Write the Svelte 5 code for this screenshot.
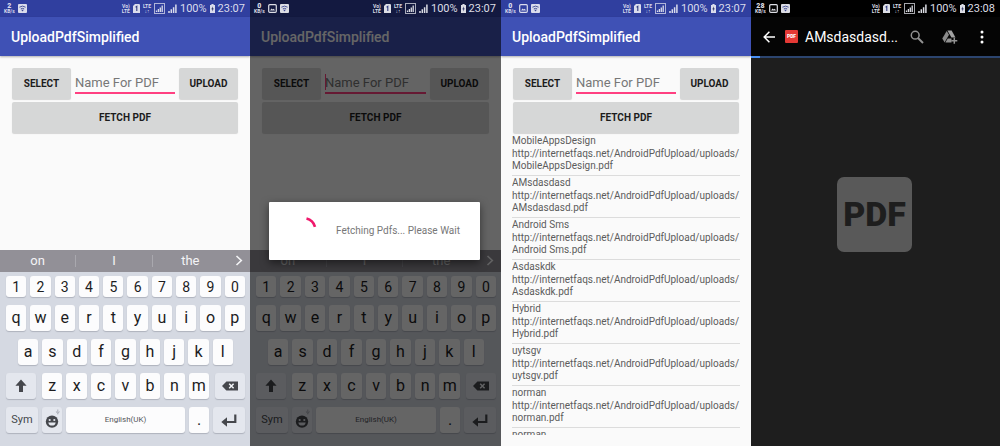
<script lang="ts">
  type Status = { speed: string; time: string; image: boolean };

  const numbers = '1234567890'.split('');
  const rowOne = 'qwertyuiop'.split('');
  const rowTwo = 'asdfghjkl'.split('');
  const rowThree = 'zxcvbnm'.split('');

  const baseUrl = 'http://internetfaqs.net/AndroidPdfUpload/uploads/';
  const pdfs = ['MobileAppsDesign', 'AMsdasdasd', 'Android Sms', 'Asdaskdk', 'Hybrid', 'uytsgv', 'norman', 'norman'];
</script>

{#snippet statusBar({ speed, time, image }: Status)}
  <div class="status">
    <span class="speed"><b>{speed}</b><span>KB/s</span></span>
    {#if image}
      <svg width="9" height="9" viewBox="0 0 9 9">
        <rect x="0.7" y="0.7" width="7.6" height="7.6" rx="1" fill="none" stroke="currentColor" stroke-width="1.2" />
        <path d="M2 6.6 3.6 4.4 4.7 5.6 5.8 4.8 7 6.6z" fill="currentColor" />
      </svg>
    {/if}
    <svg width="9" height="9" viewBox="0 0 9 9">
      <rect width="9" height="9" rx="1" fill="currentColor" />
      <path d="M1.4 3.2Q4.5 1 7.6 3.2M2.8 4.9Q4.5 3.8 6.2 4.9" fill="none" stroke="#3a4690" stroke-width="0.9" />
      <path d="M3.2 5.8h2.6L4.5 7.4z" fill="#3a4690" />
    </svg>
    <span class="spacer"></span>
    <span class="tiny"><span>Vo)</span><span>LTE</span></span>
    <svg width="7" height="9" viewBox="0 0 7 9">
      <path d="M2 0h4.2L7 .8V9H0V2z" fill="currentColor" />
      <path d="M2.6 3.2 3.8 2.4V7" fill="none" stroke="#303a80" stroke-width="1.1" />
    </svg>
    <span class="tiny"><span>LTE</span><span>↓↑</span></span>
    <svg width="11" height="11" viewBox="0 0 11 11">
      <rect x="0.5" y="0.5" width="10" height="10" fill="none" stroke="currentColor" opacity="0.75" />
      <path d="M2.5 9V7.4M4.4 9V6M6.3 9V4.4M8.2 9V2.6" stroke="currentColor" stroke-width="1.3" />
    </svg>
    <svg width="9" height="9" viewBox="0 0 9 9">
      <path d="M1 9V7M3.3 9V5.2M5.6 9V3.2M7.9 9V.6" stroke="currentColor" stroke-width="1.5" />
    </svg>
    <span>100%</span>
    <svg width="5" height="9" viewBox="0 0 5 9">
      <path d="M1.4 0h2.2v1H5v8H0V1h1.4z" fill="currentColor" />
      <path d="M3 2.2 1.3 5.2H2.4L2 7.6 3.8 4.4H2.7z" fill="#20275c" />
    </svg>
    <span class="time">{time}</span>
  </div>
{/snippet}

{#snippet form(id: string, focused: boolean)}
  <form class="form" onsubmit={(e) => e.preventDefault()}>
    <div class="fields">
      <button type="button" class="btn select">SELECT</button>
      <div class="field">
        {#if focused}<span class="caret"></span>{/if}
        <input {id} type="text" placeholder="Name For PDF" aria-label="Name For PDF" />
      </div>
      <button type="button" class="btn upload">UPLOAD</button>
    </div>
    <button type="submit" class="btn">FETCH PDF</button>
  </form>
{/snippet}

{#snippet keys(list: string[])}
  {#each list as key}
    <button type="button" class="key">{key}</button>
  {/each}
{/snippet}

{#snippet keyboard()}
  <div class="keyboard">
    <div class="suggestions">
      <button type="button">on</button>
      <button type="button">I</button>
      <button type="button">the</button>
      <button type="button" class="more" aria-label="More suggestions">
        <svg width="8" height="11" viewBox="0 0 8 11">
          <path d="M1.5 1 6.3 5.5 1.5 10" fill="none" stroke="currentColor" stroke-width="1.6" />
        </svg>
      </button>
    </div>
    <div class="rows">
      <div class="row short">{@render keys(numbers)}</div>
      <div class="row">{@render keys(rowOne)}</div>
      <div class="row inset">{@render keys(rowTwo)}</div>
      <div class="row">
        <button type="button" class="key fn shift" aria-label="Shift">
          <svg width="12" height="14" viewBox="0 0 12 14"><path d="M6 .5 11.6 6.8H8V13H4V6.8H.4z" fill="currentColor" /></svg>
        </button>
        {@render keys(rowThree)}
        <button type="button" class="key fn back" aria-label="Backspace">
          <svg width="16" height="10" viewBox="0 0 16 10">
            <path d="M4.4.5H16v9H4.4L0 5z" fill="currentColor" />
            <path d="M7.2 2.8l4.4 4.4M11.6 2.8 7.2 7.2" stroke="#f2f4f8" stroke-width="1.5" />
          </svg>
        </button>
      </div>
      <div class="row">
        <button type="button" class="key fn sym">Sym</button>
        <button type="button" class="key fn emoji" aria-label="Emoji">
          <svg width="18" height="24" viewBox="0 0 18 24">
            <circle cx="9" cy="13.6" r="6.2" fill="currentColor" />
            <circle cx="6.7" cy="12" r="1.1" fill="#e4e7ee" />
            <circle cx="11.3" cy="12" r="1.1" fill="#e4e7ee" />
            <path d="M5.3 14.4h7.4q-.7 3.2-3.7 3.2t-3.7-3.2z" fill="#e4e7ee" />
            <path d="M14.8 1.5v2.6M13.3 3.4q0 1.5 1.5 1.5t1.5-1.5M14.8 5v1.4" fill="none" stroke="#9a9ea8" stroke-width="0.8" />
          </svg>
        </button>
        <button type="button" class="key space">English(UK)</button>
        <button type="button" class="key dot">.</button>
        <button type="button" class="key fn enter" aria-label="Enter">
          <svg width="16" height="13" viewBox="0 0 16 13">
            <path d="M14.3.5V8H4" fill="none" stroke="currentColor" stroke-width="2.2" />
            <path d="M6 3.2V12.8L.3 8z" fill="currentColor" />
          </svg>
        </button>
      </div>
    </div>
  </div>
{/snippet}

<main class="screens">
  <section class="phone">
    {@render statusBar({ speed: '2', time: '23:07', image: false })}
    <header class="appbar"><h1>UploadPdfSimplified</h1></header>
    {@render form('name-start', false)}
    {@render keyboard()}
  </section>

  <section class="phone loading">
    {@render statusBar({ speed: '0', time: '23:07', image: true })}
    <header class="appbar"><h1>UploadPdfSimplified</h1></header>
    {@render form('name-loading', true)}
    {@render keyboard()}
    <div class="scrim">
      <div class="dialog" role="dialog" aria-label="Progress">
        <svg width="28" height="28" viewBox="0 0 28 28">
          <path d="M16.5 1.6A12 12 0 0 1 25 9.8" fill="none" stroke="#f0186c" stroke-width="2.6" />
        </svg>
        <p>Fetching Pdfs... Please Wait</p>
      </div>
    </div>
  </section>

  <section class="phone listing">
    {@render statusBar({ speed: '0', time: '23:07', image: true })}
    <header class="appbar"><h1>UploadPdfSimplified</h1></header>
    {@render form('name-list', false)}
    <ul class="list">
      {#each pdfs as name}
        <li>
          <span class="name">{name}</span>
          <span>{baseUrl}<wbr />{name}.pdf</span>
        </li>
      {/each}
    </ul>
  </section>

  <section class="phone viewer">
    {@render statusBar({ speed: '28', time: '23:08', image: true })}
    <header class="toolbar">
      <button type="button" aria-label="Back">
        <svg width="12" height="12" viewBox="0 0 12 12">
          <path d="M12 6H1.4M6.4.8 1.2 6l5.2 5.2" fill="none" stroke="#fff" stroke-width="1.5" />
        </svg>
      </button>
      <span class="badge">PDF</span>
      <h1>AMsdasdasd...</h1>
      <button type="button" class="search" aria-label="Search">
        <svg width="14" height="14" viewBox="0 0 14 14">
          <circle cx="5.2" cy="5.2" r="3.9" fill="none" stroke="#929292" stroke-width="1.5" />
          <path d="M8 8l5 5" stroke="#929292" stroke-width="1.9" />
        </svg>
      </button>
      <button type="button" class="drive" aria-label="Add to Drive">
        <svg width="16" height="14" viewBox="0 0 16 14">
          <path d="M4.7 1 7 4.8 2.6 12.4.3 8.6z" fill="#8a8a8a" />
          <path d="M5.4.6H9.6L13.5 7.5H9.4z" fill="#a2a2a2" />
          <path d="M5.7 8.4h3.8v4H3.4z" fill="#929292" />
          <path d="M12.3 7.8v6M9.3 10.8h6" stroke="#929292" stroke-width="1.5" />
        </svg>
      </button>
      <button type="button" aria-label="More options">
        <svg width="4" height="14" viewBox="0 0 4 14" fill="#fff">
          <circle cx="2" cy="2" r="1.5" /><circle cx="2" cy="7" r="1.5" /><circle cx="2" cy="12" r="1.5" />
        </svg>
      </button>
    </header>
    <div class="progress"><span></span></div>
    <div class="preview"><div class="placeholder">PDF</div></div>
  </section>
</main>

<style>
  :global(body) {
    margin: 0;
    background: #fafafa;
  }

  .screens {
    display: grid;
    grid-template-columns: 250fr 251fr 250fr 249fr;
    height: 100vh;
    font-family: Roboto, 'Liberation Sans', sans-serif;
  }

  .phone {
    position: relative;
    display: flex;
    flex-direction: column;
    min-width: 0;
    min-height: 0;
    overflow: hidden;
    background: #fafafa;
  }

  button {
    border: none;
    margin: 0;
    padding: 0;
    background: none;
    font-family: inherit;
    cursor: pointer;
  }

  svg {
    display: block;
    flex: none;
  }

  h1 {
    margin: 0;
  }

  .status {
    display: flex;
    align-items: center;
    gap: 3px;
    height: 17px;
    flex: none;
    padding: 0 5px 0 4px;
    background: #303f9f;
    color: #dadcec;
    font-size: 11px;
    line-height: 17px;
  }

  .speed,
  .tiny {
    display: flex;
    flex-direction: column;
    align-items: center;
    font-size: 5px;
    line-height: 5px;
    font-weight: 700;
  }

  .speed b {
    font-size: 7px;
    line-height: 6px;
  }

  .spacer {
    flex: 1;
  }

  .appbar {
    display: flex;
    align-items: center;
    height: 39px;
    flex: none;
    padding: 0 11px;
    background: #3f51b5;
    box-shadow: 0 1px 2px rgba(0, 0, 0, 0.3);
  }

  .appbar h1 {
    color: #fff;
    font-size: 14px;
    font-weight: 500;
  }

  .form {
    display: flex;
    flex-direction: column;
    gap: 3px;
    padding: 12px 12px 1px;
  }

  .fields {
    display: flex;
    gap: 4px;
  }

  .btn {
    height: 31px;
    border-radius: 2px;
    background: #d6d7d7;
    box-shadow: 0 1px 1px rgba(0, 0, 0, 0.15);
    color: #1c1c1c;
    font-size: 10px;
    font-weight: 700;
  }

  .select,
  .upload {
    width: 59px;
    flex: none;
  }

  .field {
    position: relative;
    flex: 1;
    min-width: 0;
  }

  .field input {
    box-sizing: border-box;
    width: 100%;
    height: 26px;
    padding: 4px 0 0;
    border: none;
    border-bottom: 2px solid #ff4081;
    border-radius: 0;
    outline: none;
    background: transparent;
    font-family: inherit;
    font-size: 13px;
  }

  .field input::placeholder {
    color: #777;
    opacity: 1;
  }

  .caret {
    position: absolute;
    left: 0;
    top: 6px;
    width: 1px;
    height: 16px;
    background: #ff4081;
  }

  .keyboard {
    margin-top: auto;
    background: #d5d9e2;
  }

  .suggestions {
    display: flex;
    align-items: center;
    height: 22px;
    background: #929097;
  }

  .suggestions button {
    flex: 1;
    height: 12px;
    color: #f4f4f6;
    font-size: 13px;
    line-height: 12px;
  }

  .suggestions button + button {
    border-left: 1px solid #a9a8ae;
  }

  .suggestions .more {
    display: flex;
    flex: none;
    justify-content: center;
    width: 22px;
    border: none;
  }

  .rows {
    display: flex;
    flex-direction: column;
    gap: 8px;
    padding: 4px 5px 13px 6px;
  }

  .row {
    display: flex;
    gap: 4px;
    height: 26px;
  }

  .row.short {
    height: 21px;
  }

  .inset {
    padding: 0 12px;
  }

  .key {
    display: flex;
    flex: 1;
    align-items: center;
    justify-content: center;
    min-width: 0;
    border-radius: 3px;
    background: #fcfcfd;
    box-shadow: 0 1px 1px #aeb2bd;
    color: #1d1d1f;
    font-size: 16px;
    line-height: 18px;
  }

  .short .key {
    font-size: 14px;
  }

  .key.fn {
    background: #e4e7ee;
    color: #45474c;
  }

  .key.shift,
  .key.back {
    flex: 0 0 30px;
  }

  .shift {
    margin-right: 2px;
  }

  .back {
    margin-left: 2px;
  }

  .key.sym {
    flex: 0 0 32px;
    font-size: 11px;
  }

  .key.emoji,
  .key.dot {
    flex: 0 0 20px;
  }

  .key.space {
    color: #55575c;
    font-size: 8px;
  }

  .key.enter {
    flex: 0 0 32px;
  }

  .loading .status {
    background: #131940;
  }

  .loading .status,
  .viewer .status {
    color: #dcdde4;
  }

  .scrim {
    position: absolute;
    inset: 17px 0 0;
    display: flex;
    align-items: center;
    padding: 0 21px 2px 19px;
    background: rgba(0, 0, 0, 0.6);
  }

  .dialog {
    display: flex;
    align-items: center;
    gap: 18px;
    width: 100%;
    height: 58px;
    padding-left: 21px;
    border-radius: 1px;
    background: #fff;
    box-shadow: 0 3px 8px rgba(0, 0, 0, 0.5);
  }

  .dialog p {
    margin: 0;
    color: #777;
    font-size: 10px;
    white-space: nowrap;
  }

  .listing {
    box-sizing: border-box;
    padding-bottom: 11px;
  }

  .list {
    flex: 1;
    min-height: 0;
    margin: 0 11px;
    padding: 0;
    overflow: hidden;
    list-style: none;
    color: #5c5c5c;
    font-size: 10px;
    line-height: 12px;
  }

  .list li {
    padding: 1px 0 3px;
    border-bottom: 1px solid #dcdcdc;
  }

  .name {
    display: block;
    margin-bottom: 1px;
  }

  .viewer {
    background: #1e1e1e;
  }

  .viewer .status {
    background: #000;
  }

  .toolbar {
    display: flex;
    align-items: center;
    height: 39px;
    flex: none;
    padding: 0 16px 0 12px;
    background: #050505;
  }

  .badge {
    width: 13px;
    margin: 0 7px 0 10px;
    flex: none;
    border-radius: 1px;
    background: #e53935;
    color: #fff;
    font-size: 5px;
    font-weight: 900;
    line-height: 13px;
    text-align: center;
  }

  .toolbar h1 {
    flex: 1;
    min-width: 0;
    color: #fff;
    font-size: 14px;
    font-weight: 400;
    white-space: nowrap;
  }

  .search {
    margin-left: 12px;
  }

  .drive {
    margin: 0 22px 0 18px;
  }

  .progress {
    height: 2px;
    flex: none;
    background: #2c456f;
  }

  .progress span {
    display: block;
    width: 9px;
    height: 100%;
    background: #4a90f5;
  }

  .preview {
    display: flex;
    flex: 1;
    align-items: center;
    justify-content: center;
    padding: 0 2px 76px 0;
  }

  .placeholder {
    width: 75px;
    border-radius: 7px;
    background: #595959;
    color: #1e1e1e;
    font-size: 34px;
    font-weight: 900;
    line-height: 75px;
    text-align: center;
  }
</style>
